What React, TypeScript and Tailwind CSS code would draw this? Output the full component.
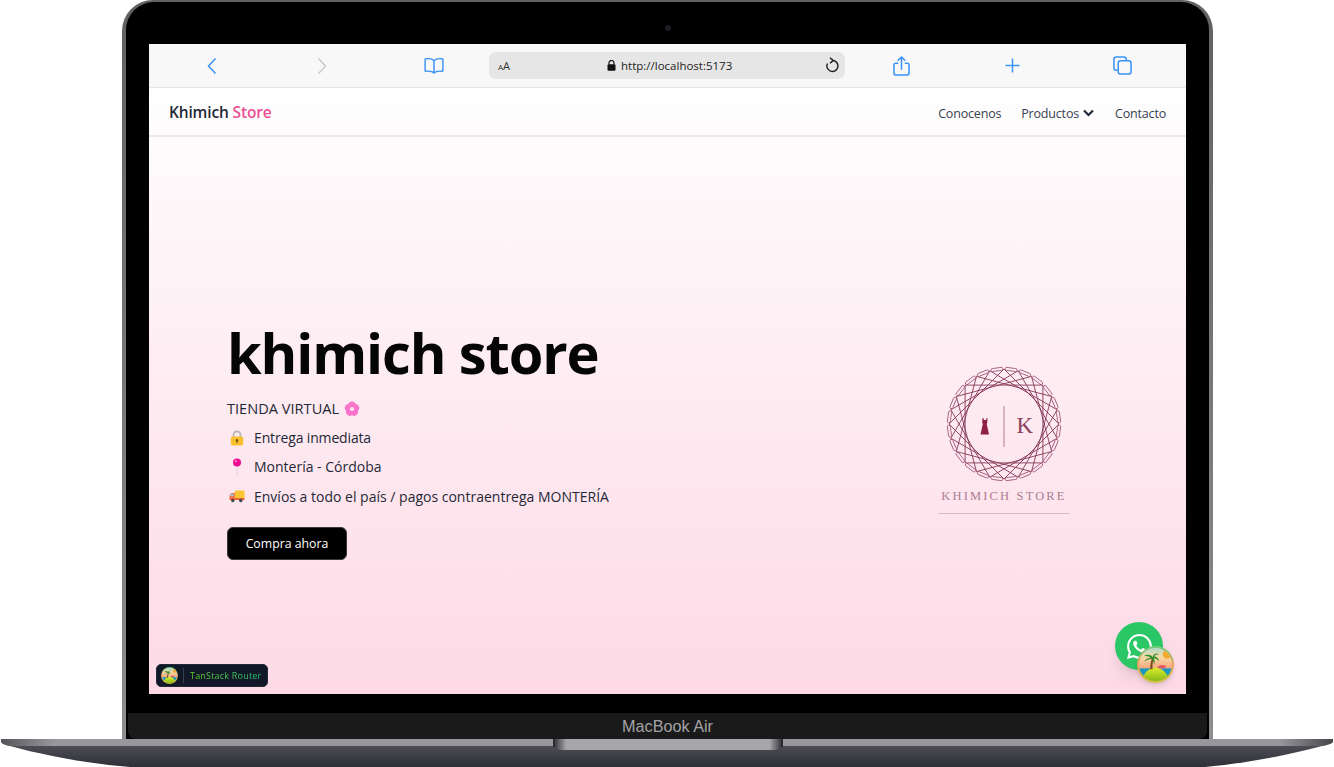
import React from "react";
import { BsWhatsapp } from "react-icons/bs";

const BLUE = "#3b93f7";

function Back() {
  return (
    <svg width="12" height="18" viewBox="0 0 12 18" fill="none" stroke={BLUE} strokeWidth="1.5">
      <path d="M9.5 1.5 2.5 9l7 7.5" />
    </svg>
  );
}
function Forward() {
  return (
    <svg width="12" height="18" viewBox="0 0 12 18" fill="none" stroke="#c9c9c9" strokeWidth="1.5">
      <path d="M2.5 1.5 9.5 9l-7 7.5" />
    </svg>
  );
}
function Book() {
  return (
    <svg width="20" height="17" viewBox="0 0 22 18" fill="none" stroke={BLUE} strokeWidth="1.6" strokeLinejoin="round">
      <path d="M11 3.5C9.5 1.8 6 1.2 2.2 1.600 1.600 1.700 1.200 2.100 1.200 2.700v11.700c0 .6.5.9 1 .9 3.500-.3 7.200.1 8.800 1.900 1.600-1.800 5.300-2.200 8.800-1.900.5 0 1-.3 1-.9V2.700c0-.6-.4-1-1-1.100C16 1.200 12.500 1.800 11 3.500Zm0 0v13" />
    </svg>
  );
}
function ShareIcon() {
  return (
    <svg width="17" height="20" viewBox="0 0 18 21" fill="none" stroke={BLUE} strokeWidth="1.6" strokeLinejoin="round">
      <path d="M5.500 7.500H3c-1.200 0-2 .8-2 2v8.500c0 1.200.8 2 2 2h12c1.200 0 2-.8 2-2V9.500c0-1.200-.8-2-2-2h-2.500" />
      <path d="M9 14V1M5.500 4.500 9 1l3.500 3.500" strokeLinecap="round" />
    </svg>
  );
}
function PlusIcon() {
  return (
    <svg width="15" height="15" viewBox="0 0 16 16" fill="none" stroke={BLUE} strokeWidth="1.600">
      <path d="M8 .5v15M.5 8h15" />
    </svg>
  );
}
function Tabs() {
  return (
    <svg width="19" height="19" viewBox="0 0 20 20" fill="none" stroke={BLUE} strokeWidth="1.600">
      <rect x="5.500" y="5" width="13.500" height="14" rx="2.500" />
      <path d="M5.500 15H3.500C2 15 1 14 1 12.500V3.500C1 2 2 1 3.500 1h8C13 1 14 2 14 3.500V5" />
    </svg>
  );
}
function Reload() {
  return (
    <svg width="14" height="17" viewBox="0 0 14 17" fill="none" stroke="#1d1d1f" strokeWidth="1.400">
      <path d="M8 3.500A5.500 5.500 0 1 1 2.500 6.500" />
      <path d="M5 .8 8.200 3.500 5 6.200" strokeWidth="1.500" />
    </svg>
  );
}

function LockIcon() {
  return (
    <svg width="9" height="11" viewBox="0 0 9 11">
      <path d="M2 4.500V3a2.500 2.500 0 0 1 5 0v1.500" fill="none" stroke="#111" strokeWidth="1.200" />
      <rect x="0.500" y="4.200" width="8" height="6.500" rx="1.200" fill="#111" />
    </svg>
  );
}

function Blossom() {
  const petals = [0, 72, 144, 216, 288];
  return (
    <svg width="16" height="16" viewBox="0 0 16 16">
      {petals.map((a) => (
        <circle key={a} cx="8" cy="4.300" r="3.700" fill="#f974cb" transform={`rotate(${a} 8 8)`} />
      ))}
      <circle cx="8" cy="8" r="2.100" fill="#fde3f2" />
    </svg>
  );
}
function LockEmoji() {
  return (
    <svg width="14" height="16" viewBox="0 0 14 16">
      <path d="M3.500 7V4.800a3.500 3.500 0 0 1 7 0V7" fill="none" stroke="#b4b4b4" strokeWidth="1.700" />
      <rect x="0.800" y="6.500" width="12.400" height="9" rx="1.800" fill="#fbc02d" />
      <circle cx="7" cy="10.300" r="1.300" fill="#7a5a10" />
      <rect x="6.400" y="10.500" width="1.200" height="2.500" fill="#7a5a10" />
    </svg>
  );
}
function PinEmoji() {
  return (
    <svg width="10" height="18" viewBox="0 0 10 18">
      <path d="M5 8v9.500" stroke="#e3d3da" strokeWidth="1" />
      <circle cx="5" cy="4.500" r="4" fill="#f00a93" />
      <circle cx="3.800" cy="3.200" r="0.900" fill="#ff9ad4" />
    </svg>
  );
}
function TruckEmoji() {
  return (
    <svg width="16" height="13" viewBox="0 0 16 13">
      <rect x="6" y="0.500" width="9.500" height="8" rx="0.800" fill="#fbc531" />
      <path d="M0.500 5 2.500 3H6v5.500H0.500Z" fill="#f4774e" />
      <path d="M2 4.200h2.500v1.800H1Z" fill="#8fd0ee" />
      <rect x="0.500" y="8" width="15" height="2" fill="#f0653c" />
      <circle cx="3.800" cy="10.500" r="1.700" fill="#44464e" />
      <circle cx="11.800" cy="10.500" r="1.700" fill="#44464e" />
    </svg>
  );
}

function IslandLogo({ size, id }: { size: number; id: string }) {
  return (
    <svg width={size} height={size} viewBox="0 0 38 38">
      <defs>
        <linearGradient id={`${id}sky`} x1="0" y1="0" x2="0" y2="1">
          <stop offset="0" stopColor="#9fdcd6" />
          <stop offset="0.3" stopColor="#f8d9a4" />
          <stop offset="0.62" stopColor="#f8a47a" />
        </linearGradient>
        <linearGradient id={`${id}rim`} x1="0" y1="0" x2="0" y2="1">
          <stop offset="0" stopColor="#6fce7e" />
          <stop offset="0.5" stopColor="#e8a05e" />
          <stop offset="1" stopColor="#c9c63a" />
        </linearGradient>
        <linearGradient id={`${id}grass`} x1="0" y1="0" x2="0" y2="1">
          <stop offset="0" stopColor="#e0ec2e" />
          <stop offset="1" stopColor="#78b514" />
        </linearGradient>
        <clipPath id={`${id}c`}>
          <circle cx="19" cy="19" r="17" />
        </clipPath>
      </defs>
      <circle cx="19" cy="19" r="19" fill={`url(#${id}rim)`} />
      <g clipPath={`url(#${id}c)`}>
        <rect width="38" height="38" fill={`url(#${id}sky)`} />
        <circle cx="31" cy="8.500" r="4.500" fill="#f6a92c" />
        <rect y="23" width="38" height="8" fill="#1a97bf" />
        <path d="M3 38C6 29 12 22 19 22S32 29 35 38Z" fill={`url(#${id}grass)`} />
        <path d="M21 22c2-3 5-3 9-1.500l-1 2-6 .5Z" fill="#e4576b" />
        <path d="M13.500 24c0-5 .7-9 2.500-13l1.700.4c-1.600 4-2 7.500-1.700 12.600Z" fill="#7b4a1e" />
        <path d="M16.500 11.500c-3-3-6.500-3-9.500-1 3-.5 5.500.2 7.500 2-3-.5-5.500.5-7 4 2.500-2.300 5-3.200 8-3 1 1.500 2 3.500 2 6 1.200-3 .7-5.300-.5-7 2 0 4 1 5.800 3.200-.6-3.200-2.800-4.700-5.300-5.200 1.500-1.500 3.200-2.200 5.300-2-3-1.700-5-.5-6.300 1.500Z" fill="#2d8e2d" />
      </g>
    </svg>
  );
}

function StoreLogo() {
  const N = 24;
  const R = 55;
  const cx = 60;
  const cy = 60;
  const chords: React.ReactNode[] = [];
  for (let i = 0; i < N; i++) {
    const a = (i / N) * Math.PI * 2;
    const b = ((i + 6) / N) * Math.PI * 2;
    chords.push(
      <line
        key={i}
        x1={cx + R * Math.cos(a)}
        y1={cy + R * Math.sin(a)}
        x2={cx + R * Math.cos(b)}
        y2={cy + R * Math.sin(b)}
        stroke="#7f2f50"
        strokeWidth="0.850"
      />
    );
  }
  const links: React.ReactNode[] = [];
  for (let i = 0; i < N; i++) {
    const deg = (i / N) * 360 + 7.500;
    links.push(
      <rect key={i} x={cx - 6} y={cy - R - 1.500} width="12" height="3" rx="1.500" fill="none" stroke="#9c5070" strokeWidth="0.800" transform={`rotate(${deg} ${cx} ${cy})`} />
    );
  }
  return (
    <svg width="120" height="120" viewBox="0 0 120 120">
      {chords}
      {links}
      <line x1="60" y1="42" x2="60" y2="83" stroke="#a0607a" strokeWidth="0.800" />
      <path d="M38.500 54h1l.3 2h2.400l.3-2h1l-.2 4.500-.6 1.500 2.300 10.500h-8.500l2.300-10.500-.6-1.500Z" fill="#8f1f45" />
      <text x="72.500" y="68.500" fontFamily="'Liberation Serif', serif" fontSize="23" fill="#8a4560">K</text>
    </svg>
  );
}

export default function App() {
  return (
    <div className="w-[1334px] h-[767px] bg-white overflow-hidden flex flex-col" style={{ fontFamily: "'Open Sans', sans-serif" }}>
      {/* lid */}
      <div className="ml-[122px] w-[1091px] h-[739px] shrink-0 rounded-t-[31px] bg-gradient-to-b from-[#616163] to-[#8e8e90] pt-[2px] px-[4px]">
        <div className="h-full rounded-t-[28px] bg-black flex flex-col">
          <div className="h-[42px] shrink-0 flex items-center justify-center pt-[10px]">
            <div className="w-[6px] h-[6px] rounded-full bg-[#1c1c20]" />
          </div>
          {/* screen */}
          <div className="relative ml-[23px] w-[1037px] h-[650px] shrink-0 flex flex-col overflow-hidden">
            {/* browser bar */}
            <div className="h-[44px] shrink-0 bg-[#f8f8f8] border-b border-[#e6e6e6] flex items-center">
              <div className="ml-[57px] flex"><Back /></div>
              <div className="ml-[98px] flex"><Forward /></div>
              <div className="ml-[96px] flex"><Book /></div>
              <div className="ml-[45px] w-[356px] h-[27px] rounded-[7px] bg-[#e6e6e6] flex items-center relative">
                <span className="ml-[9px] flex items-baseline text-[#333] leading-none">
                  <span className="text-[8px]">A</span>
                  <span className="text-[11px]">A</span>
                </span>
                <div className="ml-[97px] flex"><LockIcon /></div>
                <span className="ml-[5px] text-[11.500px] text-[#222] leading-none">http://localhost:5173</span>
                <div className="ml-auto mr-[6px] flex"><Reload /></div>
              </div>
              <div className="ml-[48px] flex"><ShareIcon /></div>
              <div className="ml-[95px] flex"><PlusIcon /></div>
              <div className="ml-[93px] flex"><Tabs /></div>
            </div>
            {/* site nav */}
            <div className="h-[49px] shrink-0 bg-gradient-to-b from-white to-[#fefbfc] border-b-2 border-[#e9e7e8] flex items-center justify-between pl-[20px] pr-[20px] pt-[2px]">
              <div className="text-[15.500px] font-semibold text-[#1f2937] tracking-[-0.150px]">
                Khimich <span className="text-[#ec4f93]">Store</span>
              </div>
              <div className="mt-[3px] flex items-center text-[12.500px] tracking-[-0.180px] text-[#374151]">
                <span>Conocenos</span>
                <span className="ml-[20px]">Productos</span>
                <svg className="ml-[4px] mb-[3px]" width="11" height="8" viewBox="0 0 11 8" fill="none" stroke="#1f2937" strokeWidth="2.200">
                  <path d="M1 1.500 5.500 6 10 1.500" />
                </svg>
                <span className="ml-[21px]">Contacto</span>
              </div>
            </div>
            {/* hero */}
            <div className="flex-1 bg-gradient-to-b from-[#fefbfc] to-[#fdd9e6] flex items-center justify-between pt-[50px] pl-[78px] pr-[115px]">
              <div className="flex flex-col items-start text-[#1f2937] pb-[2px]">
                <h1 className="text-[56px] leading-[64px] font-bold text-[#050505] tracking-[-1.130px] mb-[11px]">khimich store</h1>
                <div className="h-[29px] flex items-center text-[14.600px]">
                  <span>TIENDA VIRTUAL</span>
                  <span className="ml-[5px] flex"><Blossom /></span>
                </div>
                <div className="h-[28px] flex items-center text-[14px]">
                  <span className="w-[27px] pl-[3px] flex"><LockEmoji /></span>
                  <span className="tracking-[-0.150px]">Entrega inmediata</span>
                </div>
                <div className="h-[30px] flex items-center text-[14px]">
                  <span className="w-[27px] pl-[5px] flex"><PinEmoji /></span>
                  <span>Montería - Córdoba</span>
                </div>
                <div className="h-[30px] flex items-center text-[14px]">
                  <span className="w-[27px] pl-[2px] flex"><TruckEmoji /></span>
                  <span>Envíos a todo el país / pagos contraentrega MONTERÍA</span>
                </div>
                <button className="mt-[15px] w-[120px] h-[33px] rounded-[6px] bg-black border border-[#3a3a3a] pt-[2px] text-white text-[12.300px] font-medium">
                  Compra ahora
                </button>
              </div>
              <div className="flex flex-col items-center w-[134px] pb-[3px]">
                <StoreLogo />
                <div className="mt-[6px] text-[12.500px] tracking-[2.150px] text-[#ab7d92] whitespace-nowrap leading-none" style={{ fontFamily: "'Liberation Serif', serif" }}>
                  KHIMICH STORE
                </div>
                <div className="mt-[11px] w-[132px] h-px bg-[#d9b9c7]" />
              </div>
            </div>
            {/* floating */}
            <div className="absolute left-[7px] bottom-[7px] w-[112px] h-[23px] rounded-[5px] bg-[#111827] border border-[#1f2937] flex items-center pl-[4px]">
              <IslandLogo size={17} id="a" />
              <div className="ml-[5px] w-px h-[15px] bg-[#374151]" />
              <span className="ml-[6px] text-[9px] font-medium tracking-[0.200px] bg-gradient-to-r from-[#65d11b] to-[#1fc978] bg-clip-text text-transparent whitespace-nowrap">TanStack Router</span>
            </div>
            <div className="absolute left-[966px] top-[578px] w-[48px] h-[48px] rounded-full bg-[#2bc766] flex items-center justify-center shadow-lg">
              <BsWhatsapp size={25} color="#fff" />
            </div>
            <div className="absolute left-[988px] top-[602px] rounded-full shadow-md flex">
              <IslandLogo size={37} id="b" />
            </div>
          </div>
          <div className="h-[19px] shrink-0" />
          {/* lower strip */}
          <div className="flex-1 mx-[2px] rounded-b-[8px] bg-[#1a1a1a] flex items-center justify-center text-[16.200px] leading-none text-[#a3a3a6]" style={{ fontFamily: "'Liberation Sans', sans-serif" }}>
            MacBook Air
          </div>
        </div>
      </div>
      {/* base */}
      <svg className="block shrink-0" width="1334" height="28" viewBox="0 0 1334 28">
        <defs>
          <linearGradient id="band" x1="0" y1="0" x2="1" y2="0">
            <stop offset="0" stopColor="#55555a" />
            <stop offset="0.04" stopColor="#98989c" />
            <stop offset="0.96" stopColor="#98989c" />
            <stop offset="1" stopColor="#45454a" />
          </linearGradient>
          <linearGradient id="body" x1="0" y1="0" x2="0" y2="1">
            <stop offset="0" stopColor="#55565e" />
            <stop offset="1" stopColor="#2e2f37" />
          </linearGradient>
          <linearGradient id="notch" x1="0" y1="0" x2="1" y2="0">
            <stop offset="0" stopColor="#3c3c40" />
            <stop offset="0.05" stopColor="#a6a6aa" />
            <stop offset="0.95" stopColor="#a6a6aa" />
            <stop offset="1" stopColor="#3c3c40" />
          </linearGradient>
        </defs>
        <path d="M1 0H1333V2C1333 4 1330 5.500 1322 7 1290 16 1240 25 1205 28H130C90 25 42 16 10 7 3 5.500 1 4 1 2Z" fill="url(#body)" />
        <path d="M1 0H1333V2C1333 4 1330 5.500 1322 7H10C3 5.500 1 4 1 2Z" fill="url(#band)" />
        <rect x="553" y="0" width="230" height="8" fill="#2b2b30" />
        <path d="M555 0H781V5C781 9 778 11 774 11H562C558 11 555 9 555 5Z" fill="url(#notch)" />
      </svg>
    </div>
  );
}
